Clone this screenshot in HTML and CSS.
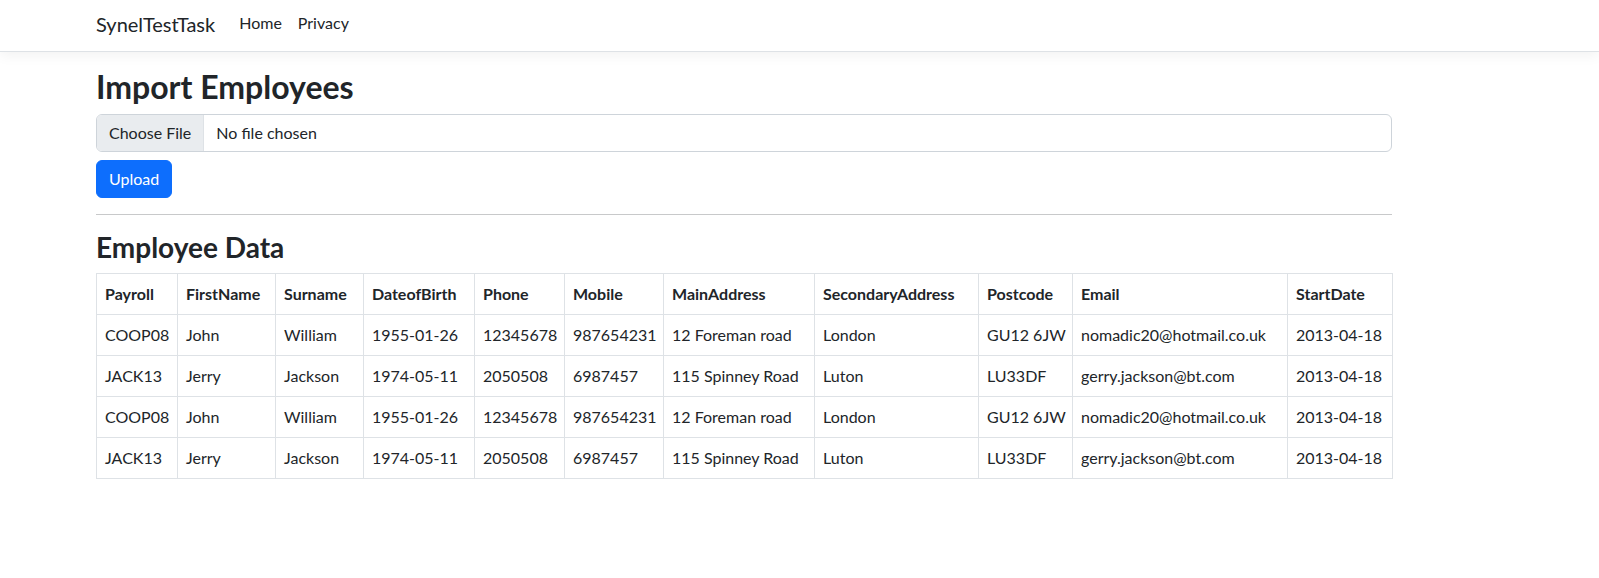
FILE: index.html
```html
<!DOCTYPE html>
<html lang="en">
<head>
<meta charset="utf-8">
<title>Import Employees - SynelTestTask</title>
<link rel="stylesheet" href="styles.css">
</head>
<body>
<header class="navbar">
  <div class="container nav-inner">
    <a class="brand" href="#">SynelTestTask</a>
    <nav class="nav-links">
      <a class="nav-link" href="#">Home</a>
      <a class="nav-link" href="#">Privacy</a>
    </nav>
  </div>
</header>
<main class="container main">
  <h2 class="title">Import Employees</h2>
  <form class="upload-form">
    <label class="file-input">
      <span class="file-btn">Choose File</span>
      <span class="file-name">No file chosen</span>
      <input type="file" class="hidden-input">
    </label>
    <div><button type="button" class="btn-primary">Upload</button></div>
  </form>
  <hr class="divider">
  <h3 class="subtitle">Employee Data</h3>
  <table class="data-table">
    <colgroup>
      <col class="c-payroll"><col class="c-first"><col class="c-sur"><col class="c-dob"><col class="c-phone"><col class="c-mobile"><col class="c-main"><col class="c-sec"><col class="c-post"><col class="c-email"><col class="c-start">
    </colgroup>
    <thead>
      <tr><th>Payroll</th><th>FirstName</th><th>Surname</th><th>DateofBirth</th><th>Phone</th><th>Mobile</th><th>MainAddress</th><th>SecondaryAddress</th><th>Postcode</th><th>Email</th><th>StartDate</th></tr>
    </thead>
    <tbody>
      <tr><td>COOP08</td><td>John</td><td>William</td><td>1955-01-26</td><td>12345678</td><td>987654231</td><td>12 Foreman road</td><td>London</td><td>GU12 6JW</td><td>nomadic20@hotmail.co.uk</td><td>2013-04-18</td></tr>
      <tr><td>JACK13</td><td>Jerry</td><td>Jackson</td><td>1974-05-11</td><td>2050508</td><td>6987457</td><td>115 Spinney Road</td><td>Luton</td><td>LU33DF</td><td>gerry.jackson@bt.com</td><td>2013-04-18</td></tr>
      <tr><td>COOP08</td><td>John</td><td>William</td><td>1955-01-26</td><td>12345678</td><td>987654231</td><td>12 Foreman road</td><td>London</td><td>GU12 6JW</td><td>nomadic20@hotmail.co.uk</td><td>2013-04-18</td></tr>
      <tr><td>JACK13</td><td>Jerry</td><td>Jackson</td><td>1974-05-11</td><td>2050508</td><td>6987457</td><td>115 Spinney Road</td><td>Luton</td><td>LU33DF</td><td>gerry.jackson@bt.com</td><td>2013-04-18</td></tr>
    </tbody>
  </table>
</main>
</body>
</html>
```

FILE: styles.css
```css
* { box-sizing: border-box; }
html, body { margin: 0; padding: 0; }
body {
  font-family: "Lato", "Noto Sans", sans-serif;
  font-size: 16px;
  line-height: 1.5;
  color: #212529;
  background: #fff;
}
.container {
  width: 1320px;
  margin-left: 84px;
  padding: 0 12px;
}
.navbar {
  height: 52px;
  background: #fff;
  border-bottom: 1px solid #dee2e6;
  box-shadow: 0 4px 12px rgba(0, 0, 0, 0.05);
  margin-bottom: 16px;
}
.nav-inner {
  display: flex;
  align-items: center;
  height: 51px;
  padding-bottom: 6px;
}
.brand {
  font-size: 20px;
  line-height: 30px;
  color: #212529;
  text-decoration: none;
  margin-right: 16px;
  margin-top: 2px;
}
.nav-links { display: flex; }
.nav-link {
  padding: 0 8px;
  color: #212529;
  text-decoration: none;
  line-height: 24px;
}
.title {
  font-size: 32px;
  font-weight: 700;
  line-height: 1.2;
  margin: 0 0 8px;
}
.file-input {
  display: flex;
  align-items: stretch;
  height: 38px;
  border: 1px solid #ced4da;
  border-radius: 6px;
  overflow: hidden;
  cursor: pointer;
}
.file-btn {
  background: #e9ecef;
  padding: 6px 12px;
  border-right: 1px solid #dee2e6;
  margin-right: 12px;
}
.file-name { padding: 6px 0; }
.hidden-input { display: none; }
.btn-primary {
  margin-top: 8px;
  height: 38px;
  padding: 6px 12px;
  font: inherit;
  line-height: 24px;
  color: #fff;
  background: #0d6efd;
  border: 1px solid #0d6efd;
  border-radius: 6px;
  cursor: pointer;
}
.divider {
  margin: 16px 0;
  border: 0;
  border-top: 1px solid #c8c9ca;
}
.subtitle {
  font-size: 28px;
  font-weight: 700;
  line-height: 1.2;
  margin: 0 0 8px;
}
.data-table {
  width: 1296px;
  table-layout: fixed;
  border-collapse: collapse;
}
.data-table th, .data-table td {
  border: 1px solid #dee2e6;
  padding: 8px;
  text-align: left;
  line-height: 24px;
  white-space: nowrap;
}
.data-table th { font-weight: 700; }
.c-payroll { width: 81px; }
.c-first { width: 98px; }
.c-sur { width: 88px; }
.c-dob { width: 111px; }
.c-phone { width: 90px; }
.c-mobile { width: 99px; }
.c-main { width: 151px; }
.c-sec { width: 164px; }
.c-post { width: 94px; }
.c-email { width: 215px; }
.c-start { width: 105px; }
```
